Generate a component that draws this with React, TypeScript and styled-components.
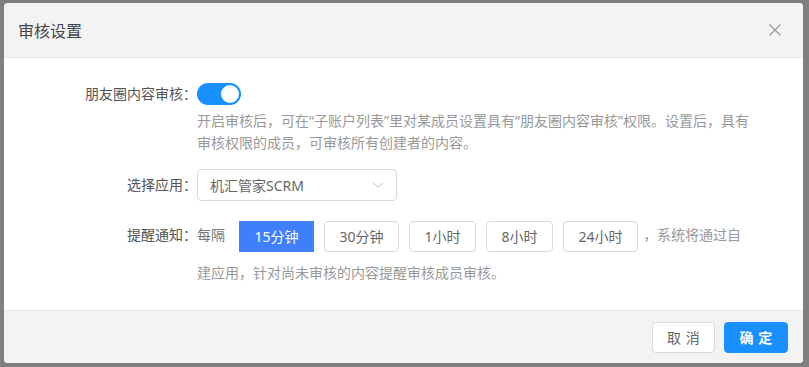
import React, { ReactElement, useState } from 'react';
import styled, { createGlobalStyle } from 'styled-components';

const GlobalStyle = createGlobalStyle`
  html, body {
    margin: 0;
    background: #7f7f7f;
    font-family: "Noto Sans", "Noto Sans CJK SC", sans-serif;
  }
`;

const Backdrop = styled.div`
  padding: 3px 6px 4px 4px;
`;

const Modal = styled.div`
  width: 799px;
  height: 360px;
  display: flex;
  flex-direction: column;
  background: #fff;
  border-radius: 4px;
  overflow: hidden;
`;

const Header = styled.header`
  height: 54px;
  flex-shrink: 0;
  display: flex;
  align-items: center;
  justify-content: space-between;
  padding: 0 21px 0 14px;
  background: #f3f3f3;
  border-bottom: 1px solid #e8e8e8;
`;

const Title = styled.h2`
  margin: 0;
  font-size: 16px;
  font-weight: normal;
  color: #444;
`;

const Close = styled.button`
  border: 0;
  padding: 0;
  background: none;
  width: 14px;
  height: 14px;
  display: flex;
  cursor: pointer;
`;

const Body = styled.div`
  flex: 1;
  padding-top: 25px;
`;

const Field = styled.div<{ $top?: number }>`
  display: grid;
  grid-template-columns: 193px 555px;
  margin-top: ${(p) => p.$top ?? 0}px;
`;

const Label = styled.div<{ $lh: number }>`
  text-align: right;
  font-size: 14px;
  line-height: ${(p) => p.$lh}px;
  color: #555;
  white-space: nowrap;
`;

const Switch = styled.button<{ $on: boolean }>`
  position: relative;
  width: 44px;
  height: 22px;
  border: 0;
  padding: 0;
  border-radius: 11px;
  background: ${(p) => (p.$on ? '#1890ff' : '#ccc')};
  cursor: pointer;
  display: block;
  &::after {
    content: '';
    position: absolute;
    top: 2px;
    left: ${(p) => (p.$on ? '24px' : '2px')};
    width: 18px;
    height: 18px;
    border-radius: 50%;
    background: #fff;
  }
`;

const Hint = styled.p`
  margin: 5px 0 0;
  font-size: 14px;
  line-height: 22px;
  color: #999;
`;

const Select = styled.div`
  width: 200px;
  height: 32px;
  box-sizing: border-box;
  border: 1px solid #d9d9d9;
  border-radius: 4px;
  padding: 0 12px;
  display: flex;
  align-items: center;
  justify-content: space-between;
  font-size: 14px;
  color: #666;
`;

const Remind = styled.div`
  font-size: 14px;
  line-height: 38px;
  color: #999;
`;

const Lead = styled.span`
  color: #777;
  margin-right: 9px;
`;

const Option = styled.button<{ $active: boolean }>`
  display: inline-block;
  vertical-align: middle;
  box-sizing: border-box;
  height: 31px;
  margin: 0 5px;
  padding: 0 14.5px;
  font: inherit;
  line-height: 29px;
  border: 1px solid ${(p) => (p.$active ? '#3f7ffc' : '#d9d9d9')};
  border-radius: ${(p) => (p.$active ? '0' : '4px')};
  background: ${(p) => (p.$active ? '#3f7ffc' : '#fff')};
  color: ${(p) => (p.$active ? '#fff' : '#666')};
  cursor: pointer;
`;

const Footer = styled.footer`
  height: 52px;
  flex-shrink: 0;
  display: flex;
  align-items: center;
  justify-content: flex-end;
  gap: 9px;
  padding-right: 15px;
  background: #f3f3f3;
  border-top: 1px solid #e8e8e8;
`;

const Action = styled.button<{ $primary?: boolean }>`
  height: 31px;
  width: ${(p) => (p.$primary ? 64 : 63)}px;
  box-sizing: border-box;
  font-family: inherit;
  font-size: 14px;
  font-weight: ${(p) => (p.$primary ? 'bold' : 'normal')};
  border-radius: 4px;
  border: 1px solid ${(p) => (p.$primary ? '#1890ff' : '#d9d9d9')};
  background: ${(p) => (p.$primary ? '#1890ff' : '#fff')};
  color: ${(p) => (p.$primary ? '#fff' : '#666')};
  cursor: pointer;
  & > span {
    letter-spacing: 0.34em;
    margin-right: -0.34em;
  }
`;

const intervals = ['15分钟', '30分钟', '1小时', '8小时', '24小时'];

const App = (): ReactElement => {
  const [on, setOn] = useState(true);
  const [picked, setPicked] = useState('15分钟');

  return (
    <>
      <GlobalStyle />
      <Backdrop>
        <Modal>
          <Header>
            <Title>审核设置</Title>
            <Close aria-label="关闭">
              <svg width="14" height="14" viewBox="0 0 14 14">
                <path d="M1.5 1.5 L12.5 12.5 M12.5 1.5 L1.5 12.5" stroke="#999" strokeWidth="1.2" fill="none" />
              </svg>
            </Close>
          </Header>
          <Body>
            <Field>
              <Label $lh={22}>朋友圈内容审核：</Label>
              <div>
                <Switch $on={on} onClick={() => setOn(!on)} />
                <Hint>
                  开启审核后，可在“子账户列表”里对某成员设置具有“朋友圈内容审核”权限。设置后，具有审核权限的成员，可审核所有创建者的内容。
                </Hint>
              </div>
            </Field>
            <Field $top={15}>
              <Label $lh={32}>选择应用：</Label>
              <Select>
                <span>机汇管家SCRM</span>
                <svg width="12" height="8" viewBox="0 0 12 8">
                  <path d="M1 1.5 L6 6.5 L11 1.5" stroke="#bbb" strokeWidth="1" fill="none" />
                </svg>
              </Select>
            </Field>
            <Field $top={15}>
              <Label $lh={38}>提醒通知：</Label>
              <Remind>
                <Lead>每隔</Lead>
                {intervals.map((item) => (
                  <Option key={item} $active={item === picked} onClick={() => setPicked(item)}>
                    {item}
                  </Option>
                ))}
                ，系统将通过自建应用，针对尚未审核的内容提醒审核成员审核。
              </Remind>
            </Field>
          </Body>
          <Footer>
            <Action>
              <span>取消</span>
            </Action>
            <Action $primary>
              <span>确定</span>
            </Action>
          </Footer>
        </Modal>
      </Backdrop>
    </>
  );
};

export default App;
